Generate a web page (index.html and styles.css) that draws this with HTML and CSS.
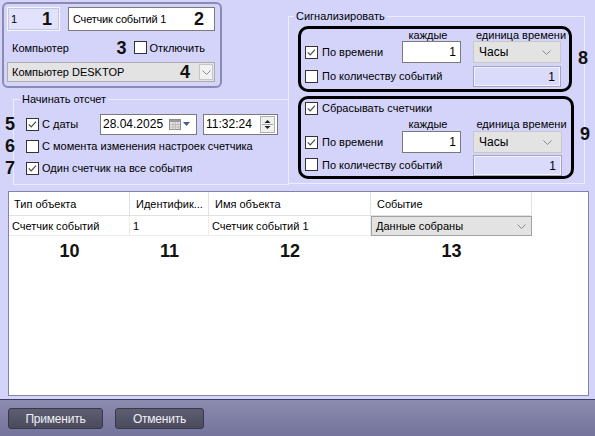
FILE: index.html
```html
<!DOCTYPE html>
<html lang="ru">
<head>
<meta charset="utf-8">
<title>Счетчик событий</title>
<link rel="stylesheet" href="styles.css">
</head>
<body>
<div class="app">
  <div class="main">
    <div class="top">
      <div class="left">
        <div class="objbox">
          <div class="row-a">
            <div class="idfield"><span>1</span><span class="num">1</span></div>
            <div class="field namefield"><span>Счетчик событий 1</span><span class="num">2</span></div>
          </div>
          <div class="row-b">
            <span>Компьютер</span>
            <span class="push num num-3">3</span>
            <svg class="cb" viewBox="0 0 13 13"><rect x="0.5" y="0.5" width="12" height="12" fill="#fff" stroke="#333"/></svg>
            <span class="cb-text">Отключить</span>
          </div>
          <div class="combo pc-combo">
            <span>Компьютер DESKTOP</span>
            <span class="push num num-4">4</span>
            <span class="dropbtn"><svg width="9" height="5" viewBox="0 0 9 5"><path d="M0.5 0.5 L4.5 4.5 L8.5 0.5" fill="none" stroke="#8a8a8a"/></svg></span>
          </div>
        </div>
        <fieldset class="startset">
          <legend>Начинать отсчет</legend>
          <div class="srow srow-5">
            <span class="anno">5</span>
            <svg class="cb" viewBox="0 0 13 13"><rect x="0.5" y="0.5" width="12" height="12" fill="#fff" stroke="#333"/><path d="M2.8 6.4 L5.2 8.9 L10 3.6" fill="none" stroke="#4a4a55" stroke-width="1.2"/></svg>
            <span class="cb-text date-label">С даты</span>
            <div class="field datefield">
              <span>28.04.2025</span>
              <span class="calicon">
                <svg width="12" height="11" viewBox="0 0 12 11"><rect x="0.5" y="0.5" width="11" height="10" fill="#e6e6e6" stroke="#8c8c8c"/><rect x="1" y="1" width="10" height="2" fill="#9a9a9a"/><path d="M1 5.5h10M1 8h10M4 3v8M6.5 3v8M9 3v8" stroke="#b4b4b4" stroke-width="0.8"/></svg>
                <svg width="7" height="4" viewBox="0 0 7 4"><path d="M0 0h7L3.5 4z" fill="#4d5c82"/></svg>
              </span>
            </div>
            <div class="field timefield">
              <span>11:32:24</span>
              <span class="spin">
                <svg width="13" height="15" viewBox="0 0 13 15"><path d="M3.5 6 L6.5 3 L9.5 6z" fill="#222"/><path d="M1 7.5h11" stroke="#a8a8a8"/><path d="M3.5 9 L6.5 12 L9.5 9z" fill="#222"/></svg>
              </span>
            </div>
          </div>
          <div class="srow srow-6">
            <span class="anno">6</span>
            <svg class="cb" viewBox="0 0 13 13"><rect x="0.5" y="0.5" width="12" height="12" fill="#fff" stroke="#333"/></svg>
            <span class="cb-text">С момента изменения настроек счетчика</span>
          </div>
          <div class="srow srow-7">
            <span class="anno">7</span>
            <svg class="cb" viewBox="0 0 13 13"><rect x="0.5" y="0.5" width="12" height="12" fill="#fff" stroke="#333"/><path d="M2.8 6.4 L5.2 8.9 L10 3.6" fill="none" stroke="#4a4a55" stroke-width="1.2"/></svg>
            <span class="cb-text">Один счетчик на все события</span>
          </div>
        </fieldset>
      </div>
      <fieldset class="sigset">
        <legend>Сигнализировать</legend>
        <div class="sigrow">
          <div class="rbox box8">
            <span class="hdr hdr-every">каждые</span>
            <span class="hdr hdr-unit">единица времени</span>
            <label class="chk">
              <svg class="cb" viewBox="0 0 13 13"><rect x="0.5" y="0.5" width="12" height="12" fill="#fff" stroke="#333"/><path d="M2.8 6.4 L5.2 8.9 L10 3.6" fill="none" stroke="#4a4a55" stroke-width="1.2"/></svg>
              <span class="cb-text">По времени</span>
            </label>
            <div class="field numfield">1</div>
            <div class="combo unitcombo"><span>Часы</span><svg width="9" height="5" viewBox="0 0 9 5"><path d="M0.5 0.5 L4.5 4.5 L8.5 0.5" fill="none" stroke="#8a8a8a"/></svg></div>
            <label class="chk span2">
              <svg class="cb" viewBox="0 0 13 13"><rect x="0.5" y="0.5" width="12" height="12" fill="#fff" stroke="#333"/></svg>
              <span class="cb-text">По количеству событий</span>
            </label>
            <div class="disfield">1</div>
          </div>
          <span class="num side-num">8</span>
        </div>
        <div class="sigrow">
          <div class="rbox box9">
            <label class="chk span3 reset">
              <svg class="cb" viewBox="0 0 13 13"><rect x="0.5" y="0.5" width="12" height="12" fill="#fff" stroke="#333"/><path d="M2.8 6.4 L5.2 8.9 L10 3.6" fill="none" stroke="#4a4a55" stroke-width="1.2"/></svg>
              <span class="cb-text">Сбрасывать счетчики</span>
            </label>
            <span class="hdr hdr-every">каждые</span>
            <span class="hdr hdr-unit">единица времени</span>
            <label class="chk">
              <svg class="cb" viewBox="0 0 13 13"><rect x="0.5" y="0.5" width="12" height="12" fill="#fff" stroke="#333"/><path d="M2.8 6.4 L5.2 8.9 L10 3.6" fill="none" stroke="#4a4a55" stroke-width="1.2"/></svg>
              <span class="cb-text">По времени</span>
            </label>
            <div class="field numfield">1</div>
            <div class="combo unitcombo"><span>Часы</span><svg width="9" height="5" viewBox="0 0 9 5"><path d="M0.5 0.5 L4.5 4.5 L8.5 0.5" fill="none" stroke="#8a8a8a"/></svg></div>
            <label class="chk span2">
              <svg class="cb" viewBox="0 0 13 13"><rect x="0.5" y="0.5" width="12" height="12" fill="#fff" stroke="#333"/></svg>
              <span class="cb-text">По количеству событий</span>
            </label>
            <div class="disfield">1</div>
          </div>
          <span class="num side-num num-9">9</span>
        </div>
      </fieldset>
    </div>
    <div class="grid">
      <div class="trow thead">
        <div class="cell">Тип объекта</div>
        <div class="cell">Идентифик...</div>
        <div class="cell">Имя объекта</div>
        <div class="cell">Событие</div>
      </div>
      <div class="trow tbody">
        <div class="cell">Счетчик событий</div>
        <div class="cell">1</div>
        <div class="cell">Счетчик событий 1</div>
        <div class="cell evcombo"><span>Данные собраны</span><svg width="9" height="5" viewBox="0 0 9 5"><path d="M0.5 0.5 L4.5 4.5 L8.5 0.5" fill="none" stroke="#8a8a8a"/></svg></div>
      </div>
      <div class="trow tnums">
        <span class="num">10</span>
        <span class="num">11</span>
        <span class="num">12</span>
        <span class="num">13</span>
      </div>
    </div>
  </div>
  <div class="bar">
    <button class="btn btn-apply">Применить</button>
    <button class="btn btn-cancel">Отменить</button>
  </div>
</div>
</body>
</html>
```

FILE: styles.css
```css
* { box-sizing: border-box; }
html, body { margin: 0; padding: 0; }
body {
  width: 595px;
  height: 436px;
  overflow: hidden;
  background: #d4d4fa;
  font-family: "Liberation Sans", Arial, sans-serif;
  font-size: 11px;
  letter-spacing: 0;
  color: #000;
}
.app { display: flex; flex-direction: column; height: 436px; }
.main { height: 399px; display: flex; flex-direction: column; }
.top { height: 191px; display: flex; }
.left { width: 288px; display: flex; flex-direction: column; }

.num {
  font-weight: bold;
  font-size: 18px;
  letter-spacing: 0;
  line-height: 1;
  color: #111;
}
.push { margin-left: auto; }

.cb { width: 13px; height: 13px; flex: none; display: block; }
.cb-text { white-space: nowrap; }

.field {
  background: #fff;
  border: 1px solid #7a7a7a;
}

/* object box */
.objbox {
  margin: 2px 0 0 2px;
  width: 220px;
  height: 86px;
  border: 2px solid #8a8ab2;
  border-radius: 6px;
  padding: 3px 5px 4px 3px;
  display: flex;
  flex-direction: column;
}
.row-a { display: flex; gap: 8px; height: 24px; }
.idfield {
  width: 53px;
  background: #e2e2fd;
  border: 1px solid #f6f6ff;
  outline: 1px solid #c4c4e4;
  outline-offset: -2px;
  display: flex;
  align-items: center;
  justify-content: space-between;
  padding: 0 7px 0 3px;
}
.namefield {
  width: 147px;
  display: flex;
  align-items: center;
  justify-content: space-between;
  padding: 0 10px 0 4px;
  letter-spacing: -0.2px;
}
.row-b {
  height: 31px;
  display: flex;
  align-items: center;
  padding: 2px 10px 0 5px;
}
.num-3 { margin-right: 8px; }
.row-b .cb-text { margin-left: 2px; }

.combo {
  background: #e3e3e3;
  border: 1px solid #adadad;
  display: flex;
  align-items: center;
}
.pc-combo { height: 20px; padding-left: 4px; }
.num-4 { margin-right: 9px; }
.dropbtn {
  width: 14px;
  height: 16px;
  margin-right: 1px;
  border: 1px solid #c6c6c6;
  background: #f2f2f2;
  display: flex;
  align-items: center;
  justify-content: center;
}

/* fieldsets */
fieldset {
  margin: 0;
  border: 1px solid #ededfe;
  min-width: 0;
}
legend { padding: 0 2px; line-height: 13px; }

.startset {
  margin: 5px 0 0 13px;
  width: 276px;
  height: 92px;
  padding: 8px 0 0 12px;
  display: flex;
  flex-direction: column;
}
.startset legend { margin-left: -6px; }
.srow {
  position: relative;
  display: flex;
  align-items: center;
}
.srow .cb-text { margin-left: 3px; }
.srow-5 { height: 20px; }
.srow-6 { height: 16px; margin-top: 4px; }
.srow-7 { height: 16px; margin-top: 6px; }
.anno {
  position: absolute;
  left: -21px;
  top: 50%;
  transform: translateY(-50%);
  font-weight: bold;
  font-size: 18px;
  letter-spacing: 0;
  line-height: 1;
  color: #111;
}
.date-label { width: 58px; }
.datefield {
  width: 97px;
  height: 21px;
  display: flex;
  align-items: center;
  justify-content: space-between;
  padding: 0 6px 0 2px;
  font-size: 12px;
}
.calicon { display: flex; align-items: center; gap: 2px; }
.timefield {
  width: 75px;
  height: 21px;
  margin-left: 6px;
  display: flex;
  align-items: center;
  justify-content: space-between;
  padding: 0 2px 0 2px;
  font-size: 12px;
}
.spin {
  width: 15px;
  height: 17px;
  border: 1px solid #b0b0b0;
  background: #f0f0f0;
  display: flex;
  align-items: center;
  justify-content: center;
}

.sigset {
  margin: 10px 0 0 0;
  width: 297px;
  height: 174px;
  padding: 3px 0 0 9px;
  display: flex;
  flex-direction: column;
  gap: 4px;
}
.sigset legend { margin-left: -4px; }
.sigrow { display: flex; align-items: center; gap: 6px; }

.rbox {
  border: 3px solid #000;
  border-radius: 10px;
  display: grid;
  grid-template-columns: 97px 59px 100px;
  column-gap: 0;
  padding: 0 8px 0 4px;
  align-items: center;
}
.box8 { width: 274px; height: 66px; grid-template-rows: 12px 22px 26px; }
.box9 { width: 276px; height: 83px; grid-template-rows: 18px 14px 22px 23px; padding-right: 10px; grid-template-columns: 97px 59px 101px; }
.hdr { text-align: center; white-space: nowrap; line-height: 12px; }
.hdr-every { grid-column: 2; padding-right: 7px; }
.hdr-unit { grid-column: 3; margin: 0 -6px 0 14px; }
.box8 .hdr { align-self: center; margin-top: -1px; }
.chk { display: flex; align-items: center; gap: 4px; }
.span2 { grid-column: 1 / span 2; }
.span3 { grid-column: 1 / span 3; }
.numfield {
  height: 22px;
  display: flex;
  align-items: center;
  justify-content: flex-end;
  padding-right: 4px;
  font-size: 12px;
}
.unitcombo {
  height: 22px;
  margin-left: 12px;
  justify-content: space-between;
  padding: 0 9px 0 5px;
  font-size: 12px;
  border-color: #c8c8c8;
}
.disfield {
  height: 21px;
  margin-left: 12px;
  align-self: end;
  background: #dadafb;
  border: 1px solid #a4a4c0;
  box-shadow: inset 0 0 0 1px #f2f2ff;
  display: flex;
  align-items: center;
  justify-content: flex-end;
  padding-right: 5px;
  font-size: 12px;
}
.box8 .disfield { margin-bottom: 2px; }
.side-num { margin-top: -2px; }
.num-9 { margin-top: -8px; }

/* table */
.grid {
  margin-left: 8px;
  width: 581px;
  height: 205px;
  background: #fff;
  border: 1px solid #8484a6;
}
.trow {
  display: grid;
  grid-template-columns: 121px 79px 162px 161px;
}
.thead { height: 24px; }
.thead .cell {
  border-right: 1px solid #e2e2e2;
  border-bottom: 1px solid #e2e2e2;
  padding-left: 5px;
  display: flex;
  align-items: center;
  white-space: nowrap;
}
.thead .cell + .cell { padding-left: 6px; }
.tbody { height: 20px; }
.tbody .cell {
  border-right: 1px solid #ececec;
  border-bottom: 1px solid #ececec;
  padding-left: 3px;
  display: flex;
  align-items: center;
  white-space: nowrap;
}
.tbody .evcombo {
  background: #e3e3e3;
  border: 1px solid #a2a2a2;
  justify-content: space-between;
  padding: 0 5px 0 4px;
}
.tnums { height: 24px; align-items: end; }
.tnums .num { text-align: center; }

/* bottom bar */
.bar {
  height: 37px;
  border-top: 1px solid #3e3e5c;
  background: linear-gradient(#8c8cb0, #73739b);
  display: flex;
  gap: 12px;
  padding: 8px 0 0 8px;
}
.btn {
  height: 21px;
  border: 1px solid #383848;
  border-radius: 3px;
  background: linear-gradient(#5e5e72, #4a4a5c);
  color: #f0f0f6;
  font-family: "Liberation Sans", Arial, sans-serif;
  font-size: 12px;
  letter-spacing: -0.2px;
  padding: 0;
  text-align: center;
}
.btn-apply { width: 95px; }
.btn-cancel { width: 89px; }
```
